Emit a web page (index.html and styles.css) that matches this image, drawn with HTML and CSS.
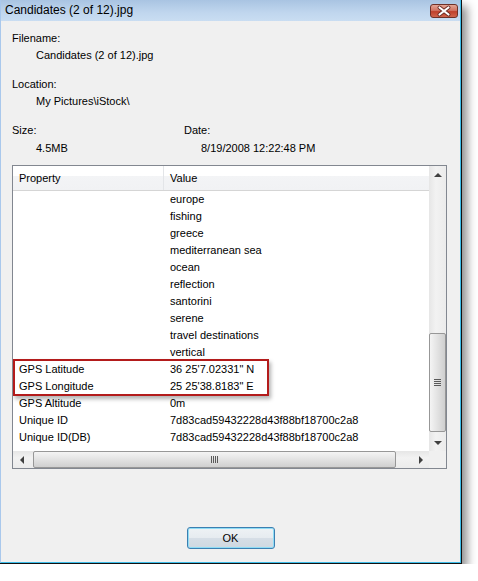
FILE: index.html
```html
<!DOCTYPE html>
<html>
<head>
  <meta charset="utf-8">
  <title>Candidates (2 of 12).jpg</title>
  <link rel="stylesheet" href="styles.css">
</head>
<body>
  <div class="window">
    <div class="frame">
      <div class="title-bar">
        <span class="title-text">Candidates (2 of 12).jpg</span>
        <div class="close-button">
          <svg width="28" height="14" viewBox="0 0 28 14">
            <path d="M9.5 3.5 L18.5 10.5 M18.5 3.5 L9.5 10.5" stroke="#6a2a22" stroke-width="4" stroke-linecap="round"/>
            <path d="M9.5 3.5 L18.5 10.5 M18.5 3.5 L9.5 10.5" stroke="#ffffff" stroke-width="2.2" stroke-linecap="round"/>
          </svg>
        </div>
      </div>

      <div class="content">
        <div class="field">
          <div class="field-label">Filename:</div>
          <div class="field-value">Candidates (2 of 12).jpg</div>
        </div>
        <div class="field">
          <div class="field-label">Location:</div>
          <div class="field-value">My Pictures\iStock\</div>
        </div>
        <div class="field-row">
          <div class="field size-field">
            <div class="field-label">Size:</div>
            <div class="field-value">4.5MB</div>
          </div>
          <div class="field date-field">
            <div class="field-label">Date:</div>
            <div class="field-value">8/19/2008 12:22:48 PM</div>
          </div>
        </div>

        <div class="list-box">
          <div class="list-main">
            <div class="list-header">
              <div class="header-cell header-property">Property</div>
              <div class="header-cell">Value</div>
            </div>
            <div class="list-row"><div class="cell-property"></div><div class="cell-value">europe</div></div>
            <div class="list-row"><div class="cell-property"></div><div class="cell-value">fishing</div></div>
            <div class="list-row"><div class="cell-property"></div><div class="cell-value">greece</div></div>
            <div class="list-row"><div class="cell-property"></div><div class="cell-value">mediterranean sea</div></div>
            <div class="list-row"><div class="cell-property"></div><div class="cell-value">ocean</div></div>
            <div class="list-row"><div class="cell-property"></div><div class="cell-value">reflection</div></div>
            <div class="list-row"><div class="cell-property"></div><div class="cell-value">santorini</div></div>
            <div class="list-row"><div class="cell-property"></div><div class="cell-value">serene</div></div>
            <div class="list-row"><div class="cell-property"></div><div class="cell-value">travel destinations</div></div>
            <div class="list-row"><div class="cell-property"></div><div class="cell-value">vertical</div></div>
            <div class="list-row"><div class="cell-property">GPS Latitude</div><div class="cell-value">36 25'7.02331" N</div></div>
            <div class="list-row"><div class="cell-property">GPS Longitude</div><div class="cell-value">25 25'38.8183" E</div></div>
            <div class="list-row"><div class="cell-property">GPS Altitude</div><div class="cell-value">0m</div></div>
            <div class="list-row"><div class="cell-property">Unique ID</div><div class="cell-value">7d83cad59432228d43f88bf18700c2a8</div></div>
            <div class="list-row"><div class="cell-property">Unique ID(DB)</div><div class="cell-value">7d83cad59432228d43f88bf18700c2a8</div></div>

            <div class="highlight"></div>
          </div>

          <div class="v-scroll">
            <div class="scroll-arrow"><span class="tri tri-up"></span></div>
            <div class="v-track">
              <div class="v-thumb"><span class="grip-h"></span></div>
            </div>
            <div class="scroll-arrow"><span class="tri tri-down"></span></div>
          </div>

          <div class="h-scroll">
            <div class="scroll-arrow"><span class="tri tri-left"></span></div>
            <div class="h-track">
              <div class="h-thumb"><span class="grip-v"></span></div>
            </div>
            <div class="scroll-arrow"><span class="tri tri-right"></span></div>
          </div>

          <div class="corner"></div>
        </div>

        <div class="button-row">
          <button class="ok-button">OK</button>
        </div>
      </div>
    </div>
  </div>
</body>
</html>
```

FILE: styles.css
```css
body {
  margin: 0;
  background-color: #ffffff;
  font-family: "Liberation Sans", Arial, sans-serif;
  font-size: 11px;
  color: #000000;
}

.window {
  width: 462px;
  height: 564px;
  box-sizing: border-box;
  border-right: 1px solid #111111;
  border-bottom: 1px solid #111111;
  box-shadow: 5px 6px 9px rgba(0, 0, 0, 0.45);
}

.frame {
  height: 100%;
  box-sizing: border-box;
  border-left: 1px solid #a9c8ec;
  border-right: 1px solid #3dbde9;
  border-bottom: 1px solid #3dbde9;
  display: flex;
  flex-direction: column;
}

/* title bar */

.title-bar {
  height: 21px;
  display: flex;
  align-items: flex-start;
  justify-content: space-between;
  background: linear-gradient(#a9c4e2, #c0d6ee 60%, #c9ddf2);
}

.title-text {
  font-size: 12px;
  line-height: 21px;
  padding-left: 4px;
}

.close-button {
  width: 28px;
  height: 14px;
  margin-top: 4px;
  margin-right: 2px;
  box-sizing: border-box;
  border: 1px solid #6e3027;
  border-radius: 3px;
  background: linear-gradient(#e4a595, #d17463 45%, #bf402b 55%, #d0644c);
  display: flex;
}

.close-button svg {
  margin: -1px;
}

/* file info */

.content {
  flex: 1;
  background-color: #f0f0f0;
  padding: 9px 0 0 11px;
}

.field {
  margin-bottom: 12px;
}

.field-label,
.field-value {
  line-height: 17px;
}

.field-value {
  padding-left: 24px;
}

.field-row {
  display: flex;
}

.size-field {
  width: 172px;
  margin-bottom: 0;
}

.date-field {
  margin-bottom: 0;
}

.date-field .field-value {
  padding-left: 17px;
}

.field-row .field-label {
  margin-bottom: 1px;
}

/* property list */

.list-box {
  margin-top: 8px;
  width: 435px;
  height: 304px;
  box-sizing: border-box;
  border: 1px solid #828790;
  background-color: #ffffff;
  display: grid;
  grid-template-columns: 416px 17px;
  grid-template-rows: 285px 17px;
}

.list-main {
  position: relative;
  overflow: hidden;
}

.list-header {
  height: 24px;
  border-bottom: 1px solid #d5d5d5;
  display: grid;
  grid-template-columns: 151px 1fr;
  background: linear-gradient(#ffffff, #ffffff 40%, #f3f4f6 42%, #f1f2f4);
}

.header-cell {
  line-height: 24px;
  padding-left: 6px;
}

.header-property {
  border-right: 1px solid #e3e5e8;
}

.list-row {
  height: 17px;
  line-height: 17px;
  display: grid;
  grid-template-columns: 151px 1fr;
  white-space: nowrap;
}

.cell-property {
  padding-left: 6px;
}

.cell-value {
  padding-left: 6px;
}

.highlight {
  position: absolute;
  left: 0;
  top: 193px;
  width: 256px;
  height: 37px;
  box-sizing: border-box;
  border: 2px solid #b31b1b;
  box-shadow: 2px 3px 4px rgba(0, 0, 0, 0.3);
}

/* scrollbars */

.v-scroll {
  grid-row: 1;
  grid-column: 2;
  display: flex;
  flex-direction: column;
  background: linear-gradient(90deg, #e6e6e6, #f2f2f2 40%, #ebebeb);
}

.h-scroll {
  grid-row: 2;
  grid-column: 1;
  display: flex;
  background: linear-gradient(#e6e6e6, #f2f2f2 40%, #ebebeb);
}

.corner {
  grid-row: 2;
  grid-column: 2;
  background-color: #f0f0f0;
}

.scroll-arrow {
  width: 17px;
  height: 17px;
  flex: none;
  display: flex;
  align-items: center;
  justify-content: center;
}

.tri {
  width: 0;
  height: 0;
  border: 4px solid transparent;
}

.tri-up {
  border-bottom-color: #404040;
  border-top-width: 0;
}

.tri-down {
  border-top-color: #404040;
  border-bottom-width: 0;
}

.tri-left {
  border-right-color: #404040;
  border-left-width: 0;
}

.tri-right {
  border-left-color: #404040;
  border-right-width: 0;
}

.v-track {
  flex: 1;
  padding-top: 150px;
}

.v-thumb {
  height: 99px;
  box-sizing: border-box;
  border: 1px solid #979797;
  border-radius: 2px;
  background: linear-gradient(90deg, #f4f4f4, #e2e2e2 50%, #cfcfcf);
  display: flex;
  align-items: center;
  justify-content: center;
}

.grip-h {
  width: 7px;
  height: 7px;
  background: repeating-linear-gradient(#5a5a5a 0 1px, transparent 1px 2px);
}

.h-track {
  flex: 1;
  padding-left: 3px;
}

.h-thumb {
  width: 363px;
  height: 17px;
  box-sizing: border-box;
  border: 1px solid #979797;
  border-radius: 2px;
  background: linear-gradient(#f4f4f4, #e2e2e2 50%, #cfcfcf);
  display: flex;
  align-items: center;
  justify-content: center;
}

.grip-v {
  width: 7px;
  height: 7px;
  background: repeating-linear-gradient(90deg, #5a5a5a 0 1px, transparent 1px 2px);
}

/* OK button */

.button-row {
  margin-top: 58px;
  width: 437px;
  display: flex;
  justify-content: center;
}

.ok-button {
  width: 88px;
  height: 22px;
  border: 1px solid #3c7fb1;
  border-radius: 3px;
  box-shadow: inset 0 0 0 1px #8fdcf5;
  background: linear-gradient(#eef2f5, #e6ebf0 50%, #d6dee6 52%, #cfd8e1);
  font-family: "Liberation Sans", Arial, sans-serif;
  font-size: 11px;
  color: #000000;
  padding: 0;
}
```
